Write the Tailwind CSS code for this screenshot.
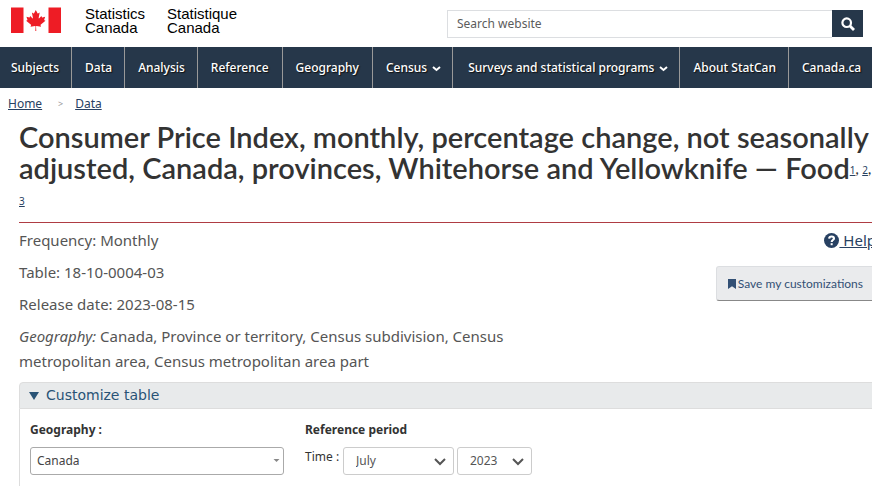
<!DOCTYPE html>
<html lang="en">
<head>
<meta charset="utf-8">
<meta name="viewport" content="width=device-width, initial-scale=1">
<title>Consumer Price Index, monthly - Statistics Canada</title>
<script src="https://cdn.jsdelivr.net/npm/@tailwindcss/browser@4"></script>
</head>
<body class="bg-white font-['Noto_Sans',sans-serif] text-[#555] overflow-x-hidden">
<header>
  <div class="flex items-start justify-between pl-2.5 pr-[9px] h-[47px]">
    <a href="#" class="flex items-start pt-[7px] text-black" aria-label="Statistics Canada">
      <svg class="w-[51px] h-[26px] shrink-0" viewBox="0 0 51 26" fill="#ee1c25">
        <path d="M1 .5h12.500V26H1zM38.500 .5H51V26H38.500z"/>
        <path transform="translate(.84 .9) scale(.0052)" d="m4890 4430-45-863a95 95 0 0 1 111-98l859 151-116-320a65 65 0 0 1 20-73l941-762-212-99a65 65 0 0 1-34-79l186-572-542 115a65 65 0 0 1-73-38l-105-247-423 454a65 65 0 0 1-111-57l204-1052-327 189a65 65 0 0 1-91-27l-332-652-332 652a65 65 0 0 1-91 27l-327-189 204 1052a65 65 0 0 1-111 57l-423-454-105 247a65 65 0 0 1-73 38l-542-115 186 572a65 65 0 0 1-34 79l-212 99 941 762a65 65 0 0 1 20 73l-116 320 859-151a95 95 0 0 1 111 98l-45 863z"/>
      </svg>
      <span class="ml-6 w-[82px] font-['Liberation_Sans',Arial,sans-serif] text-[15px] leading-[14px]">Statistics<br>Canada</span>
      <span lang="fr" class="font-['Liberation_Sans',Arial,sans-serif] text-[15px] leading-[14px]">Statistique<br>Canada</span>
    </a>
    <form class="flex mt-2.5 h-7 w-[416px]">
      <label for="q" class="sr-only">Search website</label>
      <input id="q" type="search" placeholder="Search website" class="min-w-0 grow border border-r-0 border-[#dcdee1] px-[9px] text-[12px] placeholder:text-[#5c5c5c] outline-none">
      <button type="button" aria-label="Search" class="flex h-[27px] w-[31px] items-center justify-center bg-[#26374a]">
        <svg class="size-[14px]" viewBox="0 0 14 14" fill="none" stroke="#fff"><circle cx="5.700" cy="5.700" r="4.300" stroke-width="2.200"/><path d="M9 9l4 4" stroke-width="2.800"/></svg>
      </button>
    </form>
  </div>
  <nav class="bg-[#26374a] text-white text-[12px] font-medium">
    <ul class="flex h-[41px] whitespace-nowrap divide-x divide-[#999] [text-shadow:1px_1px_1px_#111]">
      <li class="flex"><a href="#" class="flex items-center pl-[11px] pr-3">Subjects</a></li>
      <li class="flex bg-[#243850]"><a href="#" class="flex items-center pl-[13px] pr-3">Data</a></li>
      <li class="flex"><a href="#" class="flex items-center pl-[13px] pr-3">Analysis</a></li>
      <li class="flex"><a href="#" class="flex items-center px-[13px]">Reference</a></li>
      <li class="flex"><a href="#" class="flex items-center px-[13px]">Geography</a></li>
      <li class="flex"><a href="#" class="flex items-center gap-[5px] pl-[13px] pr-[11px]">Census<svg class="mt-[3px] w-[9px] h-[6px]" viewBox="0 0 9 6" fill="none" stroke="#fff" stroke-width="2"><path d="M1 1l3.500 3L8 1"/></svg></a></li>
      <li class="flex"><a href="#" class="flex items-center gap-[5px] pl-[15px] pr-[11px]">Surveys and statistical programs<svg class="mt-[3px] w-[9px] h-[6px]" viewBox="0 0 9 6" fill="none" stroke="#fff" stroke-width="2"><path d="M1 1l3.500 3L8 1"/></svg></a></li>
      <li class="flex"><a href="#" class="flex items-center pl-[13px] pr-3">About StatCan</a></li>
      <li class="flex"><a href="#" class="flex items-center pl-[13px]">Canada.ca</a></li>
    </ul>
  </nav>
</header>
<nav aria-label="Breadcrumb" class="pl-2 pt-2 text-[12px] leading-4">
  <ol class="flex items-center text-[#284162]">
    <li><a href="#" class="underline">Home</a></li>
    <li aria-hidden="true" class="w-[33px] pl-1 text-center text-[9px] text-[#999]">&gt;</li>
    <li><a href="#" class="underline">Data</a></li>
  </ol>
</nav>
<main class="pl-[19px] -mr-1 pt-[9px]">
  <h1 class="border-b border-[#af3c43] pb-2 font-['Lato',sans-serif] text-[29px] leading-[31px] font-semibold text-[#333]">Consumer Price Index, monthly, percentage change, not seasonally adjusted, Canada, provinces, Whitehorse and Yellowknife — Food<span class="align-[5px] text-[14px] leading-none"><a href="#" class="font-['Noto_Sans',sans-serif] text-[10px] font-normal text-[#284162] underline">1</a>, <a href="#" class="font-['Noto_Sans',sans-serif] text-[10px] font-normal text-[#284162] underline">2</a>, <a href="#" class="font-['Noto_Sans',sans-serif] text-[10px] font-normal text-[#284162] underline">3</a></span></h1>
  <div class="flex items-start justify-between pt-[5px] text-[15px] leading-[25px]">
    <div class="w-[500px] space-y-[7px]">
      <p>Frequency: Monthly</p>
      <p>Table: 18-10-0004-03</p>
      <p>Release date: 2023-08-15</p>
      <p><i>Geography:</i> Canada, Province or territory, Census subdivision, Census metropolitan area, Census metropolitan area part</p>
    </div>
    <div class="flex flex-col items-end whitespace-nowrap">
      <a href="#" class="flex items-center text-[#284162] underline"><svg class="size-[15px]" viewBox="0 0 14 14"><circle cx="7" cy="7" r="7" fill="#284162"/><path d="M4.800 5.300C4.900 3.800 6 3.300 7.100 3.300c1.200 0 2.200.7 2.200 1.800C9.300 6.500 7.200 6.600 7.200 8.300" fill="none" stroke="#fff" stroke-width="2"/><path d="M6.200 9.500h1.900v1.900H6.200z" fill="#fff"/></svg><span class="whitespace-pre"> Help</span></a>
      <button type="button" class="mt-[13px] flex h-[35px] items-center gap-[2px] rounded-[3px] border border-[#dcdee1] border-b-[#888] bg-[#eaebed] pl-[11px] pr-3 font-['Lato',sans-serif] text-[12px] text-[#335075]"><svg class="w-2 h-2.5" viewBox="0 0 8 10" fill="#335075"><path d="M0 0h8v10L4 7.200 0 10z"/></svg>Save my customizations</button>
    </div>
  </div>
  <details open class="mt-2">
    <summary class="flex h-[27px] cursor-pointer list-none items-center gap-[7px] rounded-tl-[4px] border border-[#ddd] bg-[#e8eaeb] pl-[9px] font-['DejaVu_Sans',sans-serif] text-[14px] text-[#295376]"><svg class="size-[10px]" viewBox="0 0 10 10" fill="#295376"><path d="M0 1h10L5 9z"/></svg>Customize table</summary>
    <div class="flex gap-[21px] border-l border-[#ddd] pl-2.5 pt-3 pb-4 text-[12px] text-[#333]">
      <div class="flex w-[254px] flex-col">
        <label for="geo" class="font-bold leading-[18px]">Geography :</label>
        <div class="relative mt-2">
          <select id="geo" class="h-7 w-full appearance-none rounded-[3px] border border-[#aaa] bg-white px-1.5 text-[12px] text-[#444]"><option>Canada</option></select>
          <svg class="pointer-events-none absolute right-1 top-3 w-[7px] h-1" viewBox="0 0 7 4" fill="#888"><path d="M.5 0h6L3.500 3z"/></svg>
        </div>
      </div>
      <fieldset>
        <legend class="font-bold leading-[18px]">Reference period</legend>
        <div class="mt-2 flex items-start gap-[3px]">
          <label for="month" class="leading-5 w-[35px] whitespace-nowrap">Time :</label>
          <div class="relative">
            <select id="month" class="h-7 w-[111px] appearance-none rounded-[3px] border border-[#ccc] bg-white px-3 text-[12px] text-[#555]"><option>July</option></select>
            <svg class="pointer-events-none absolute right-2 top-[11px] w-3 h-2" viewBox="0 0 12 8" fill="none" stroke="#555" stroke-width="2"><path d="M1 1l5 5 5-5"/></svg>
          </div>
          <div class="relative">
            <label for="year" class="sr-only">Year</label>
            <select id="year" class="h-7 w-[75px] appearance-none rounded-[3px] border border-[#ccc] bg-white px-3 text-[12px] text-[#555]"><option>2023</option></select>
            <svg class="pointer-events-none absolute right-2 top-[11px] w-3 h-2" viewBox="0 0 12 8" fill="none" stroke="#555" stroke-width="2"><path d="M1 1l5 5 5-5"/></svg>
          </div>
        </div>
      </fieldset>
    </div>
  </details>
</main>
</body>
</html>
